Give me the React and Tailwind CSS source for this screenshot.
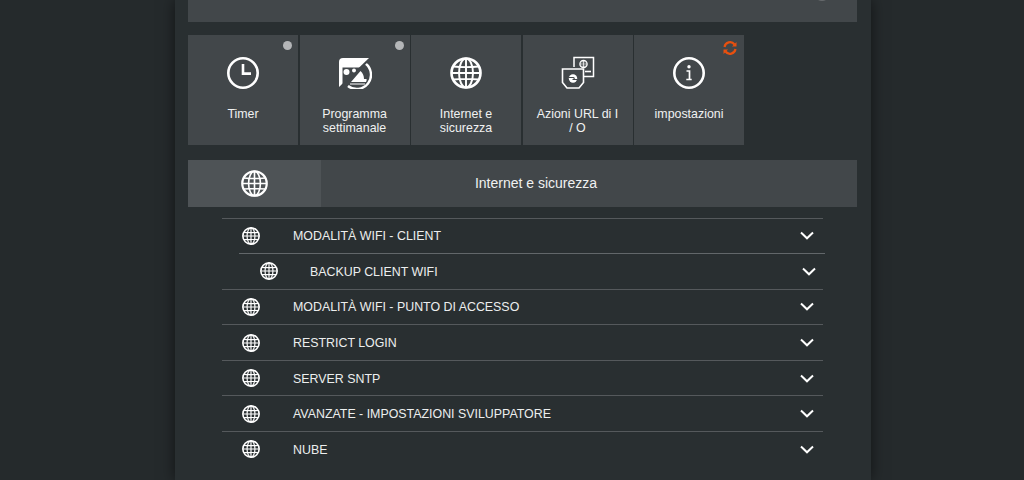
const rows = [
  { label: 'MODALITÀ WIFI - CLIENT' },
  { label: 'BACKUP CLIENT WIFI', nested: true },
  { label: 'MODALITÀ WIFI - PUNTO DI ACCESSO' },
  { label: 'RESTRICT LOGIN' },
  { label: 'SERVER SNTP' },
  { label: 'AVANZATE - IMPOSTAZIONI SVILUPPATORE' },
  { label: 'NUBE' },
]

function Globe({ className, sw = 2.4 }) {
  return (
    <svg viewBox="0 0 32 32" className={className} fill="none" stroke="currentColor">
      <circle cx="16" cy="16" r="14.500" strokeWidth={sw * 1.1} />
      <path
        d="M3.500 9.500Q16 10.800 28.500 9.500M1.500 16h29M3.500 22.500Q16 21.200 28.500 22.500M16 1.500v29"
        strokeWidth={sw * 0.8}
      />
      <ellipse cx="16" cy="16" rx="7" ry="14.500" strokeWidth={sw * 0.8} />
    </svg>
  )
}

function Clock() {
  return (
    <svg viewBox="0 0 32 32" className="h-8 w-8 text-white" fill="none" stroke="currentColor" strokeWidth="2.600">
      <circle cx="16" cy="16" r="14.700" />
      <path d="M16 7v9.600h8" />
    </svg>
  )
}

function Schedule() {
  return (
    <svg viewBox="0 0 34 32" className="h-8 w-[34px] text-white" fill="none">
      <path d="M1 30V5a4 4 0 0 1 4-4h26L1 30Z" fill="currentColor" />
      <path d="M4.500 10.500h19L4.500 28Z" fill="#42474a" />
      <circle cx="8.500" cy="15" r="3" fill="currentColor" />
      <circle cx="16" cy="13.500" r="2" fill="currentColor" />
      <path d="M27.500 6.500A13.500 13.500 0 1 1 10 29" stroke="currentColor" strokeWidth="2.400" />
      <path d="M13 25h15c.5-1 .8-2 .5-3h-2.500c0-3-1-6-3.500-8Z" fill="currentColor" />
      <path d="M12 27h15" stroke="currentColor" strokeWidth="1" />
      <path d="M3 30 31 3" stroke="#42474a" strokeWidth="1.600" />
    </svg>
  )
}

function UrlActions() {
  return (
    <svg viewBox="0 0 34 34" className="h-[34px] w-[34px] text-white" fill="none" stroke="currentColor">
      <path d="M13 11V1.500h19.500v19H23" strokeWidth="1.500" />
      <circle cx="22.500" cy="8" r="3.600" strokeWidth="1.300" />
      <path d="M19 8h7M22.500 4.500v7M19.800 5.800h5.400M19.800 10.200h5.400" strokeWidth=".7" />
      <path d="M24 15.500h6" strokeWidth="1.600" />
      <path d="M1.500 13h21v13.500L18 32H6l-4.500-5.500Z" strokeWidth="1.600" />
      <circle cx="12" cy="22.500" r="4.200" fill="currentColor" stroke="none" />
      <path d="M8 21.500h4.500c1 0 1 2 0 2M16 23.500h-4.500" stroke="#42474a" strokeWidth="1.100" />
    </svg>
  )
}

function Info() {
  return (
    <svg viewBox="0 0 32 32" className="h-8 w-8 text-white" fill="none" stroke="currentColor" strokeWidth="2.600">
      <circle cx="16" cy="16" r="14.700" />
      <circle cx="16" cy="9.800" r="1.700" fill="currentColor" stroke="none" />
      <path d="M13.500 14h3v8M13.300 22.500h5.400" strokeWidth="1.700" />
    </svg>
  )
}

function Refresh() {
  return (
    <svg viewBox="0 0 14 14" className="h-[14px] w-[14px]" fill="none" stroke="#e8500f" strokeWidth="2.200">
      <path d="M1.500 6a5.600 5.600 0 0 1 10-2.500" />
      <path d="M12.500 8a5.600 5.600 0 0 1-10 2.500" />
      <path d="M13.500 1v4.500H9ZM.5 13V8.500H5Z" fill="#e8500f" stroke="none" />
    </svg>
  )
}

function Tile({ icon, label, dot, sync }) {
  return (
    <div className="relative flex h-[110px] w-[110px] flex-col items-center bg-[#42474a] px-[13px] pt-[22px] text-center">
      <div className="flex h-8 items-center justify-center">{icon}</div>
      <div className="mt-[18px] text-[12.4px] leading-[14px] text-[#f0f1f1]">{label}</div>
      {dot ? <span className="absolute right-[6px] top-[6px] h-[9px] w-[9px] rounded-full bg-[#b4b6b8]" /> : null}
      {sync ? (
        <span className="absolute right-[7px] top-[6px]">
          <Refresh />
        </span>
      ) : null}
    </div>
  )
}

function Chevron({ className }) {
  return (
    <svg viewBox="0 0 14 9" className={className} fill="none" stroke="white" strokeWidth="2">
      <path d="M1 1.500 7 7.300l6-5.800" />
    </svg>
  )
}

function Row({ label, nested }) {
  if (nested) {
    return (
      <div className="-mr-[2px] ml-[17px] flex h-[35.550px] items-center border-t border-[#62676a] text-[#eceeee]">
        <div className="flex w-[71px] justify-start pl-[21px]">
          <Globe className="h-[18px] w-[18px] text-white" sw={2.6} />
        </div>
        <span className="flex-1 pt-[1.660px] text-[12.4px]">{label}</span>
        <Chevron className="mr-[9.500px] h-[9px] w-[14px]" />
      </div>
    )
  }
  return (
    <div className="flex h-[35.550px] items-center border-t border-[#55595c] text-[#eceeee]">
      <div className="flex w-[71px] justify-start pl-[20px]">
        <Globe className="h-[18px] w-[18px] text-white" sw={2.6} />
      </div>
      <span className="flex-1 pt-[1.660px] text-[12.4px]">{label}</span>
      <Chevron className="mr-[9.500px] h-[9px] w-[14px]" />
    </div>
  )
}

export default function App() {
  return (
    <div className="h-[480px] w-[1024px] overflow-hidden bg-[#252a2c] font-['Liberation_Sans',Arial,sans-serif]">
      <div className="ml-[175px] h-[480px] w-[696px] bg-[#292f31] px-[13px] shadow-[0_0_14px_rgba(0,0,0,0.55)]">
        <div className="relative h-[22px] w-[669px] bg-[#42474a]">
          <span className="absolute -top-[15px] right-[27px] h-[16px] w-[16px] rounded-full bg-[#666a6d]" />
        </div>

        <div className="mt-[13px] flex gap-[1.500px]">
          <Tile icon={<Clock />} label="Timer" dot />
          <Tile icon={<Schedule />} label="Programma settimanale" dot />
          <Tile icon={<Globe className="h-8 w-8 text-white" />} label="Internet e sicurezza" />
          <Tile icon={<UrlActions />} label="Azioni URL di I / O" />
          <Tile icon={<Info />} label="impostazioni" sync />
        </div>

        <div className="mt-[15px] flex h-[47px] w-[669px] items-center bg-[#42474a]">
          <div className="flex h-full w-[133px] items-center justify-center bg-[#4e5356]">
            <Globe className="h-[27px] w-[27px] text-white" sw={2.4} />
          </div>
          <div className="flex-1 pr-[106px] text-center text-[14px] text-[#f0f1f1]">Internet e sicurezza</div>
        </div>

        <div className="ml-[34px] mt-[10.600px] w-[601px]">
          {rows.map((r) => (
            <Row key={r.label} label={r.label} nested={r.nested} />
          ))}
        </div>
      </div>
    </div>
  )
}
